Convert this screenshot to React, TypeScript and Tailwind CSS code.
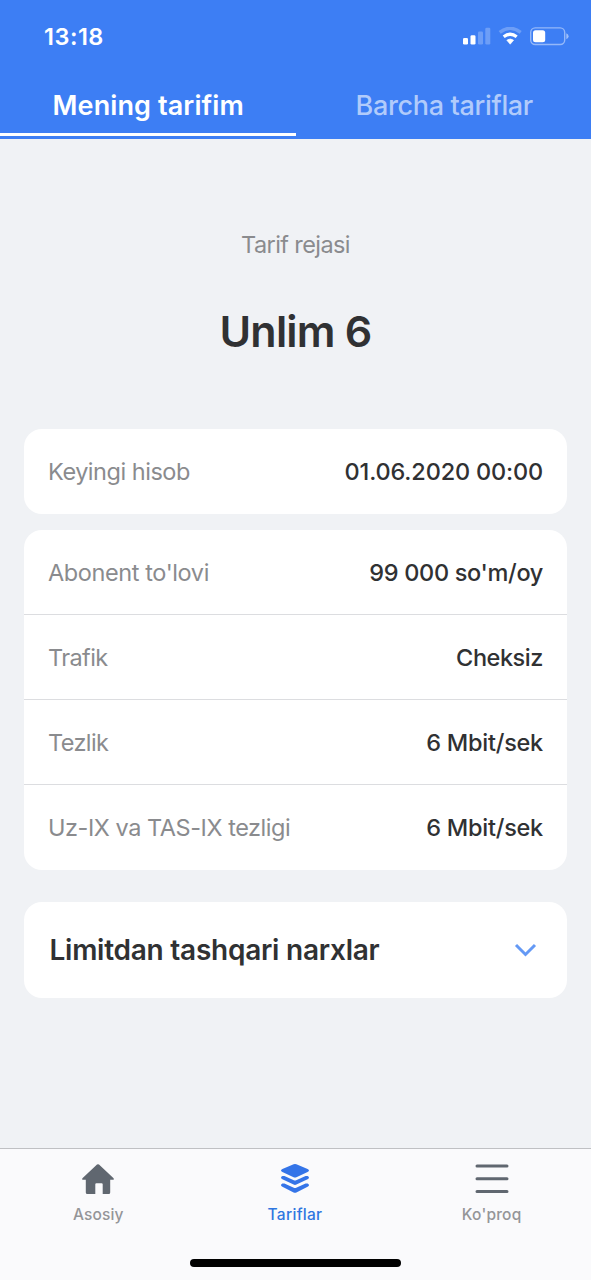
import React from "react";

const details = [
  { label: "Abonent to'lovi", value: "99 000 so'm/oy", labelSpacing: "tracking-[-0.4px]", valueSpacing: "tracking-[-0.33px]" },
  { label: "Trafik", value: "Cheksiz", labelSpacing: "tracking-[-0.6px]", valueSpacing: "tracking-[-0.45px]" },
  { label: "Tezlik", value: "6 Mbit/sek", labelSpacing: "tracking-[-0.6px]", valueSpacing: "tracking-[-0.25px]" },
  { label: "Uz-IX va TAS-IX tezligi", value: "6 Mbit/sek", labelSpacing: "tracking-[-0.45px]", valueSpacing: "tracking-[-0.25px]" },
];

type RowProps = {
  label: string;
  value: string;
  labelSpacing: string;
  valueSpacing: string;
};

const Row: React.FC<RowProps> = ({ label, value, labelSpacing, valueSpacing }) => {
  return (
    <div className="h-[85px] px-6 text-[23.5px] leading-[85px] whitespace-nowrap flex items-start justify-between">
      <span className={`text-[#8a8b8e] ${labelSpacing}`}>{label}</span>
      <span className={`font-medium text-[#303133] ${valueSpacing}`}>{value}</span>
    </div>
  );
};

const StatusBar: React.FC = () => {
  return (
    <div className="flex h-[72px] items-center justify-between pr-[22px] pl-11 text-white">
      <span className="pt-0.5 text-[23.5px] font-semibold tracking-[0.5px]">13:18</span>
      <svg className="mt-0.5" width="106" height="20" viewBox="0 0 106 20" fill="none">
        {/* signal */}
        <rect x="0" y="11" width="5" height="6.5" rx="1.3" fill="#fff" />
        <rect x="7.5" y="8.3" width="5" height="9.2" rx="1.3" fill="#fff" />
        <rect x="15" y="4.5" width="5" height="13" rx="1.3" fill="#fff" fillOpacity=".25" />
        <rect x="22.3" y="0.7" width="5" height="16.8" rx="1.3" fill="#fff" fillOpacity=".25" />
        {/* wifi */}
        <path d="M36.7 5.4Q47.2-2.7 57.7 5.4" stroke="#fff" strokeOpacity=".25" strokeWidth="3.4" />
        <path d="M40.7 9.8Q47.2 4.7 53.7 9.8" stroke="#fff" strokeWidth="3.2" />
        <path d="M43.8 13.2Q47.2 10.7 50.6 13.2L47.2 17.2Z" fill="#fff" stroke="#fff" strokeWidth=".6" strokeLinejoin="round" />
        {/* battery */}
        <rect x="67.7" y="0.9" width="34" height="16.6" rx="4.5" stroke="#fff" strokeOpacity=".45" strokeWidth="1.4" />
        <rect x="70" y="3.2" width="12.2" height="12" rx="2.5" fill="#fff" />
        <path d="M103.3 6.3Q105.6 7.1 105.6 9.3Q105.6 11.5 103.3 12.3Z" fill="#fff" fillOpacity=".5" />
      </svg>
    </div>
  );
};

const TabBar: React.FC = () => {
  return (
    <nav className="h-[132px] border-t border-[#bfc0c3] bg-[#fafafc]">
      <div className="mr-px grid h-[78px] grid-cols-3 text-center text-[15.5px] leading-5 font-medium text-[#949598]">
        <div className="flex flex-col items-center pt-[14px]">
          <svg width="34" height="34" viewBox="0 0 34 34" fill="#606770">
            <path d="M16 1.6Q17 .7 18 1.6L32.6 15.2Q33.6 16.7 32 16.8H29.2V29.5Q29.2 31 27.7 31H21.7V21.3Q21.7 20.2 20.6 20.2H15.4Q14.3 20.2 14.3 21.3V31H6.3Q4.8 31 4.8 29.5V16.8H2Q.4 16.7 1.4 15.2Z" />
          </svg>
          <span className="mt-2 tracking-[0.15px]">Asosiy</span>
        </div>
        <div className="flex flex-col items-center pt-[14px] text-[#2f76e0]">
          <svg width="30" height="34" viewBox="0 0 30 34" fill="#3474e8">
            <path d="M13.6 1.3Q15 .7 16.4 1.3L27.6 5.9Q30.4 7.5 27.6 9.1L16.4 14.2Q15 14.8 13.6 14.2L2.4 9.1Q-.4 7.5 2.4 5.9Z" />
            <path d="M2.4 13.1Q3.4 12.7 4.4 13.1L13.8 17.2Q15 17.7 16.2 17.2L25.6 13.1Q26.6 12.7 27.6 13.1Q30.4 14.7 27.6 16.3L16.4 21.6Q15 22.2 13.6 21.6L2.4 16.3Q-.4 14.7 2.4 13.1Z" />
            <path d="M2.4 20.6Q3.4 20.2 4.4 20.6L13.8 24.7Q15 25.2 16.2 24.7L25.6 20.6Q26.6 20.2 27.6 20.6Q30.4 22.2 27.6 23.8L16.4 29.4Q15 30 13.6 29.4L2.4 23.8Q-.4 22.2 2.4 20.6Z" />
          </svg>
          <span className="mt-2 tracking-[0.3px]">Tariflar</span>
        </div>
        <div className="flex flex-col items-center pt-[14px]">
          <svg width="34" height="34" viewBox="0 0 34 34" stroke="#606770" strokeWidth="3" strokeLinecap="round">
            <path d="M2 3H32M2 15.7H32M2 28.5H32" />
          </svg>
          <span className="mt-2 tracking-[0.2px]">Ko'proq</span>
        </div>
      </div>
      {/* home indicator */}
      <div className="mx-auto mt-8 h-2 w-[211px] rounded-full bg-black" />
    </nav>
  );
};

const App: React.FC = () => {
  return (
    <div className="flex h-[1280px] w-[591px] flex-col bg-[#f0f2f5] font-['Inter',sans-serif]">
      <header className="h-[139px] bg-[#3d7ef4]">
        <StatusBar />
        <div className="grid h-16 grid-cols-2 text-center text-[27px] leading-[68px] font-semibold whitespace-nowrap">
          <div className="h-16 border-b-[3px] border-white pl-px tracking-[0.1px] text-white">Mening tarifim</div>
          <div className="h-16 pl-0.5 font-medium tracking-[-0.33px] text-[#b1cbfb]">Barcha tariflar</div>
        </div>
      </header>

      <main className="flex-1 px-6 pt-[90px]">
        <p className="text-center text-[23.5px] leading-8 tracking-[-0.6px] text-[#8a8b8e]">Tarif rejasi</p>
        <h1 className="mt-10 text-center text-[43px] leading-[60px] font-semibold tracking-[-0.8px] text-[#303133]">Unlim 6</h1>

        <section className="mt-[68px] rounded-[18px] bg-white">
          <Row label="Keyingi hisob" value="01.06.2020 00:00" labelSpacing="tracking-[-0.48px]" valueSpacing="tracking-[-0.17px]" />
        </section>

        <section className="mt-4 divide-y divide-[#dcdde0] rounded-[18px] bg-white">
          {details.map((item) => (
            <Row key={item.label} {...item} />
          ))}
        </section>

        <section className="mt-8 flex h-24 items-center justify-between rounded-[18px] bg-white pr-[30px] pl-[25.5px]">
          <h2 className="text-[28px] font-semibold tracking-[-0.25px] text-[#303133]">Limitdan tashqari narxlar</h2>
          <svg className="mb-px" width="23" height="16" viewBox="0 0 23 16" fill="none" stroke="#6499f5" strokeWidth="3">
            <path d="M2 3L11.5 12.5L21 3" />
          </svg>
        </section>
      </main>

      <TabBar />
    </div>
  );
};

export default App;
